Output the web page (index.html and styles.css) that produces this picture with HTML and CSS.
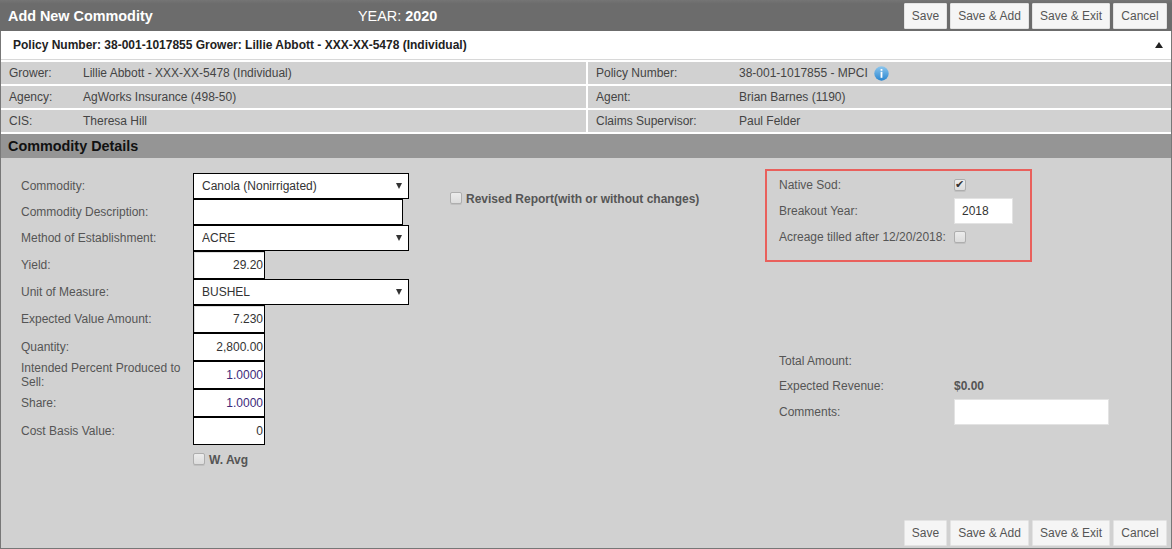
FILE: index.html
```html
<!DOCTYPE html>
<html lang="en">
<head>
<meta charset="utf-8">
<title>Add New Commodity</title>
<link rel="stylesheet" href="styles.css">
</head>
<body>
<div class="frame">
  <header class="topbar">
    <h1 class="title">Add New Commodity</h1>
    <div class="year">YEAR: <b>2020</b></div>
    <div class="actions">
      <button class="btn btn-save">Save</button>
      <button class="btn btn-add">Save &amp; Add</button>
      <button class="btn btn-exit">Save &amp; Exit</button>
      <button class="btn btn-cancel">Cancel</button>
    </div>
  </header>
  <div class="accordion">
    <span>Policy Number: 38-001-1017855 Grower: Lillie Abbott - XXX-XX-5478 (Individual)</span>
    <i class="caret"></i>
  </div>
  <div class="info">
    <div class="cell left"><span class="k">Grower:</span><span>Lillie Abbott - XXX-XX-5478 (Individual)</span></div>
    <div class="cell right"><span class="k">Policy Number:</span><span>38-001-1017855 - MPCI</span>
      <svg class="info-icon" width="15" height="15" viewBox="0 0 15 15" aria-hidden="true">
        <defs><linearGradient id="ig" x1="0" y1="0" x2="0" y2="1"><stop offset="0" stop-color="#8cc6ee"/><stop offset="1" stop-color="#2a86d0"/></linearGradient></defs>
        <circle cx="7.5" cy="7.5" r="7.2" fill="url(#ig)"/>
        <rect x="6.6" y="3" width="1.8" height="1.8" fill="#fff"/>
        <rect x="6.6" y="5.8" width="1.8" height="6" fill="#fff"/>
      </svg>
    </div>
    <div class="cell left"><span class="k">Agency:</span><span>AgWorks Insurance (498-50)</span></div>
    <div class="cell right"><span class="k">Agent:</span><span>Brian Barnes (1190)</span></div>
    <div class="cell left"><span class="k">CIS:</span><span>Theresa Hill</span></div>
    <div class="cell right"><span class="k">Claims Supervisor:</span><span>Paul Felder</span></div>
  </div>
  <h2 class="section">Commodity Details</h2>
  <main class="content">
    <div class="form">
      <div class="col-fields">
        <div class="row h26"><label>Commodity:</label><span class="sel"><select><option>Canola (Nonirrigated)</option></select></span></div>
        <div class="row h26"><label>Commodity Description:</label><input class="txt wide" type="text"></div>
        <div class="row h26"><label>Method of Establishment:</label><span class="sel"><select><option>ACRE</option></select></span></div>
        <div class="row h28"><label>Yield:</label><input class="txt num inset" type="text" value="29.20"></div>
        <div class="row h26"><label>Unit of Measure:</label><span class="sel"><select><option>BUSHEL</option></select></span></div>
        <div class="row h28"><label>Expected Value Amount:</label><input class="txt num inset" type="text" value="7.230"></div>
        <div class="row h28"><label>Quantity:</label><input class="txt num" type="text" value="2,800.00"></div>
        <div class="row h28"><label class="two">Intended Percent Produced to Sell:</label><input class="txt num purple" type="text" value="1.0000"></div>
        <div class="row h28"><label>Share:</label><input class="txt num purple" type="text" value="1.0000"></div>
        <div class="row h28"><label>Cost Basis Value:</label><input class="txt num" type="text" value="0"></div>
        <div class="row wavg"><span></span><span class="chk-label"><input class="chk" type="checkbox"><b>W. Avg</b></span></div>
      </div>
      <div class="col-mid">
        <span class="chk-label"><input class="chk" type="checkbox"><b>Revised Report(with or without changes)</b></span>
      </div>
      <div class="col-side">
        <div class="redbox">
          <div class="srow"><label>Native Sod:</label><input class="chk" type="checkbox" checked></div>
          <div class="srow"><label>Breakout Year:</label><input class="plain year-in" type="text" value="2018"></div>
          <div class="srow"><label>Acreage tilled after 12/20/2018:</label><input class="chk" type="checkbox"></div>
        </div>
        <div class="totals">
          <div class="srow"><label>Total Amount:</label></div>
          <div class="srow"><label>Expected Revenue:</label><b>$0.00</b></div>
          <div class="srow"><label>Comments:</label><input class="plain comments" type="text"></div>
        </div>
      </div>
    </div>
    <div class="actions bottom">
      <button class="btn btn-save">Save</button>
      <button class="btn btn-add">Save &amp; Add</button>
      <button class="btn btn-exit">Save &amp; Exit</button>
      <button class="btn btn-cancel">Cancel</button>
    </div>
  </main>
</div>
</body>
</html>
```

FILE: styles.css
```css
* { box-sizing: border-box; }
html, body { margin: 0; height: 100%; }
body { font-family: "Liberation Sans", Arial, sans-serif; font-size: 12px; color: #555; background: #fff; overflow: hidden; }
.frame { height: 549px; display: flex; flex-direction: column; border: 1px solid #777; border-top: 0; }

.topbar { height: 31px; flex: none; background: linear-gradient(#757575 0, #6c6c6c 12%, #6c6c6c 100%); display: flex; align-items: center; color: #fff; margin: 0 -1px; padding-left: 8px; }
.title { margin: 0; width: 350px; font-size: 14.4px; font-weight: bold; }
.year { font-size: 14.4px; }
.actions { margin-left: auto; display: flex; gap: 3px; padding-right: 5px; }
.btn { height: 26px; padding: 0; border: 1px solid #e3e3e3; border-radius: 1px; background: #f5f5f5; color: #555; font: 12px "Liberation Sans", Arial, sans-serif; }
.btn-save { width: 43px; }
.btn-add { width: 79px; }
.btn-exit { width: 78px; }
.btn-cancel { width: 54px; }

.accordion { height: 29px; flex: none; background: #fff; border-bottom: 1px solid #d8d8d8; display: flex; align-items: center; justify-content: space-between; padding: 0 8px 0 12px; color: #222; font-weight: bold; }
.caret { width: 0; height: 0; border-left: 4px solid transparent; border-right: 4px solid transparent; border-bottom: 6px solid #222; }

.info { flex: none; margin-top: 2px; display: grid; grid-template-columns: 585px 583px; column-gap: 2px; row-gap: 2px; }
.cell { height: 22px; background: #d1d1d1; display: flex; align-items: center; color: #444; }
.cell.left { padding-left: 8px; }
.cell.left .k { width: 74px; }
.cell.right { padding-left: 8px; }
.cell.right .k { width: 143px; }
.info-icon { margin-left: 6px; }

.section { flex: none; height: 24px; margin: 2px 0 0; background: #959595; color: #111; font-size: 14.4px; font-weight: bold; line-height: 24px; padding-left: 7px; }

.content { flex: 1; background: #d1d1d1; display: flex; flex-direction: column; }
.form { display: flex; padding-top: 15px; }
.col-fields { width: 449px; padding-left: 20px; flex: none; }
.row { display: grid; grid-template-columns: 172px auto; align-items: center; justify-items: start; }
.h26 { height: 26px; }
.h28 { height: 28px; }
.row label { line-height: 14px; }
.two { width: 165px; }
.sel { position: relative; display: block; width: 216px; height: 26px; }
.sel select { width: 100%; height: 100%; appearance: none; -webkit-appearance: none; border: 1px solid #000; border-radius: 0; background: #fff; padding: 0 0 0 8px; color: #333; font: 12px "Liberation Sans", Arial, sans-serif; }
.sel::after { content: ""; position: absolute; right: 7px; top: 10px; width: 0; height: 0; border-left: 3.5px solid transparent; border-right: 3.5px solid transparent; border-top: 6px solid #333; pointer-events: none; }
.txt { height: 100%; border: 1px solid #000; border-radius: 0; background: #fff; color: #333; font: 12px "Liberation Sans", Arial, sans-serif; padding: 0 1px; outline: none; }
.wide { width: 210px; }
.num { width: 72px; text-align: right; }
.inset { box-shadow: inset 1px 1px 0 #ddd; }
.purple { color: #3d2a7a; }
.wavg { margin-top: 7px; }
.chk-label { display: flex; align-items: center; gap: 4px; color: #555; }
.chk-label b { position: relative; top: 1px; }
.chk { appearance: none; -webkit-appearance: none; width: 12px; height: 12px; margin: 0; border: 1px solid #aeaeae; border-radius: 2px; background: linear-gradient(#ececec, #dcdcdc); box-shadow: 0 1px 0 #c0c0c0; position: relative; flex: none; }
.chk:checked::after { content: "\2714"; position: absolute; left: 0; top: -2px; font-size: 11px; line-height: 14px; color: #333; font-family: "DejaVu Sans", sans-serif; }

.col-mid { width: 315px; flex: none; padding-top: 18px; }
.col-side { flex: none; width: 344px; }
.redbox { width: 267px; height: 93px; margin-top: -4px; border: 2px solid #e9605c; padding: 1px 0 0 12px; }
.redbox .srow { height: 26px; }
.redbox .srow:last-child { height: 25px; }
.srow { display: flex; align-items: center; height: 25.5px; }
.srow label { width: 175px; flex: none; }
.plain { border: 1px solid #e3e3e3; background: #fff; border-radius: 0; color: #333; font: 12px "Liberation Sans", Arial, sans-serif; height: 26px; outline: none; }
.year-in { width: 59px; padding-left: 7px; }
.comments { width: 155px; }
.totals { margin-top: 86px; padding-left: 14px; }

.actions.bottom { margin-top: auto; margin-bottom: 2px; padding-right: 4px; justify-content: flex-end; margin-left: 0; }
```
